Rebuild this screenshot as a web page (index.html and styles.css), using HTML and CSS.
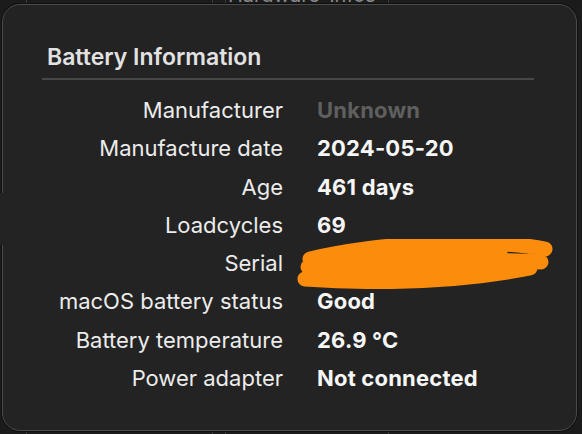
FILE: index.html
```html
<!DOCTYPE html>
<html lang="en">

<head>
    <meta charset="UTF-8">
    <meta name="viewport" content="width=device-width, initial-scale=1.0">
    <title>Battery Information</title>
    <link rel="stylesheet" href="styles.css">
</head>

<body>
    <!-- Window behind the popover -->
    <div class="window">
        <div class="col col-a"></div>
        <div class="col col-b"></div>
        <div class="col col-c"></div>
        <div class="col col-d"><span class="tab-title">Hardware-Infos</span></div>
        <div class="col col-e"></div>
    </div>

    <!-- Popover -->
    <div class="popover">
        <h1 class="title">Battery Information</h1>
        <div class="divider"></div>
        <div class="info-grid">
            <div class="label">Manufacturer</div>
            <div class="value muted">Unknown</div>

            <div class="label">Manufacture date</div>
            <div class="value">2024-05-20</div>

            <div class="label">Age</div>
            <div class="value">461 days</div>

            <div class="label">Loadcycles</div>
            <div class="value">69</div>

            <div class="label">Serial</div>
            <div class="value serial">
                <svg class="scribble" width="262" height="50" viewBox="297 239 262 50">
                    <path d="M310 259 C 340 252, 390 244, 440 243 S 520 244, 545 249" />
                    <path d="M308 267 C 380 262, 470 258, 541 262" />
                    <path d="M305 279 C 380 284, 460 282, 530 268" />
                    <path d="M320 272 L 520 268" />
                    <path d="M330 262 L 500 252" />
                </svg>
            </div>

            <div class="label">macOS battery status</div>
            <div class="value">Good</div>

            <div class="label">Battery temperature</div>
            <div class="value">26.9 °C</div>

            <div class="label">Power adapter</div>
            <div class="value">Not connected</div>
        </div>
    </div>
</body>

</html>
```

FILE: styles.css
```css
body {
    margin: 0;
    width: 582px;
    height: 434px;
    overflow: hidden;
    background: #1b1b1b;
    font-family: 'Inter', 'Noto Sans', sans-serif;
    color: #ececec;
    position: relative;
}

/* Background window */
.window {
    display: flex;
    height: 434px;
}

.col {
    border-right: 1px solid #3a3a3a;
    overflow: hidden;
}

.col-a {
    width: 26px;
}

.col-b {
    width: 185px;
}

.col-c {
    width: 12px;
}

.col-d {
    width: 162px;
}

.col-e {
    flex: 1;
    border-right: none;
}

.tab-title {
    display: block;
    margin-top: -17px;
    padding-left: 2px;
    font-size: 20px;
    color: #8a8a8a;
    white-space: nowrap;
}

/* Popover */
.popover {
    position: absolute;
    left: 2px;
    top: 4px;
    width: 492px;
    height: 385.5px;
    padding: 39.5px 42px 0 39px;
    background: #232323;
    border: 1px solid #4b4b4b;
    border-radius: 18px;
    box-shadow: 0 0 0 1px #101010;
}

.popover::before {
    content: "";
    position: absolute;
    left: -4px;
    top: 188px;
    width: 7px;
    height: 52px;
    background: #232323;
    border-radius: 4px;
}

.title {
    margin: 0;
    padding-left: 5px;
    font-size: 23px;
    font-weight: 600;
    line-height: 25px;
    color: #e2e2e2;
}

.divider {
    height: 2px;
    margin-top: 8px;
    background: #474747;
}

.info-grid {
    display: grid;
    grid-template-columns: 241px 1fr;
    column-gap: 34px;
    margin-top: 11.5px;
    font-size: 22px;
    line-height: 38.25px;
}

.label {
    text-align: right;
    color: #ececec;
}

.value {
    font-weight: 700;
    letter-spacing: 0.2px;
    color: #f6f6f6;
}

.value.muted {
    color: #5f5f5f;
}

.serial {
    position: relative;
    height: 38.25px;
}

.scribble {
    position: absolute;
    left: -20px;
    top: -5px;
}

.scribble path {
    fill: none;
    stroke: #fb8c0c;
    stroke-width: 15;
    stroke-linecap: round;
}
```
